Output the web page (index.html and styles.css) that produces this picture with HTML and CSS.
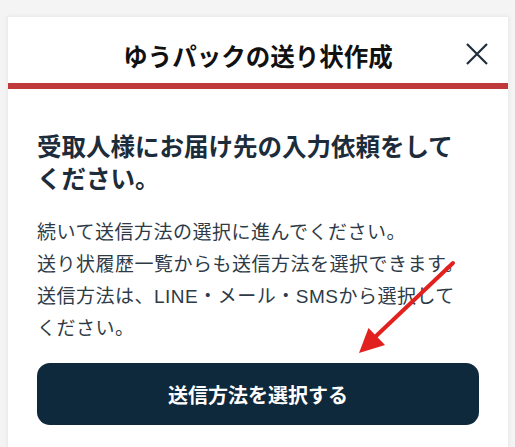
FILE: index.html
```html
<!DOCTYPE html>
<html lang="ja">

<head>
    <meta charset="utf-8">
    <title>ゆうパックの送り状作成</title>
    <link rel="stylesheet" href="styles.css">
</head>

<body>
    <div class="modal">
        <div class="modal-header">
            <p class="modal-title">ゆうパックの送り状作成</p>
            <button class="close-button" aria-label="閉じる">
                <svg width="22" height="22" viewBox="0 0 22 22">
                    <path d="M1 1 L21 21 M21 1 L1 21" stroke="#1e2e3c" stroke-width="2.2" fill="none" />
                </svg>
            </button>
        </div>

        <div class="modal-body">
            <p class="lead">受取人様にお届け先の入力依頼をして<br>ください。</p>
            <p class="note">
                続いて送信方法の選択に進んでください。<br>
                送り状履歴一覧からも送信方法を選択できます。<br>
                送信方法は、LINE・メール・SMSから選択して<br>ください。
            </p>
            <button class="send-button">送信方法を選択する</button>
        </div>
    </div>

    <!-- red arrow pointing at the button -->
    <svg class="arrow" width="515" height="447" viewBox="0 0 515 447">
        <line x1="453" y1="263" x2="374" y2="338" stroke="#e2211f" stroke-width="4" stroke-linecap="round" />
        <polygon points="359,353 368.5,328 385,345" fill="#e2211f" />
    </svg>
</body>

</html>
```

FILE: styles.css
```css
body {
    background-color: #f4f4f4;
    margin: 0;
    padding: 16px 6px 0 7px;
    height: 431px;
    overflow: hidden;
    position: relative;
    font-family: "Liberation Sans", "Noto Sans CJK JP", sans-serif;
}

p {
    margin: 0;
}

/* White sheet */
.modal {
    background-color: #ffffff;
    border: 1px solid #ececec;
    border-bottom: none;
    box-shadow: 0 0 4px rgba(0, 0, 0, 0.05);
    height: 100%;
}

.modal-header {
    height: 72px;
    display: flex;
    justify-content: center;
    align-items: center;
    padding-top: 10px;
    box-sizing: border-box;
    border-bottom: 6px solid #bf393a;
    position: relative;
}

.modal-title {
    font-family: "Noto Sans CJK JP", sans-serif;
    font-size: 24.5px;
    font-weight: bold;
    color: #111111;
}

.close-button {
    position: absolute;
    right: 20px;
    top: 26px;
    background: transparent;
    border: none;
    padding: 0;
    width: 22px;
    height: 22px;
    cursor: pointer;
}

.close-button svg {
    display: block;
}

.modal-body {
    padding: 41px 29px 0 29px;
}

.lead {
    font-family: "Noto Sans CJK JP", sans-serif;
    font-size: 24.5px;
    font-weight: bold;
    line-height: 32px;
    color: #1c2c3a;
}

.note {
    margin-top: 23px;
    font-size: 19px;
    letter-spacing: 0.5px;
    line-height: 32px;
    color: #2e3b47;
}

.send-button {
    display: block;
    width: 100%;
    height: 62px;
    margin-top: 18px;
    background-color: #0f293c;
    color: #ffffff;
    border: none;
    border-radius: 13px;
    font-family: "Noto Sans CJK JP", sans-serif;
    font-size: 20px;
    font-weight: bold;
    cursor: pointer;
}

.arrow {
    position: absolute;
    left: 0;
    top: 0;
    pointer-events: none;
}
```
